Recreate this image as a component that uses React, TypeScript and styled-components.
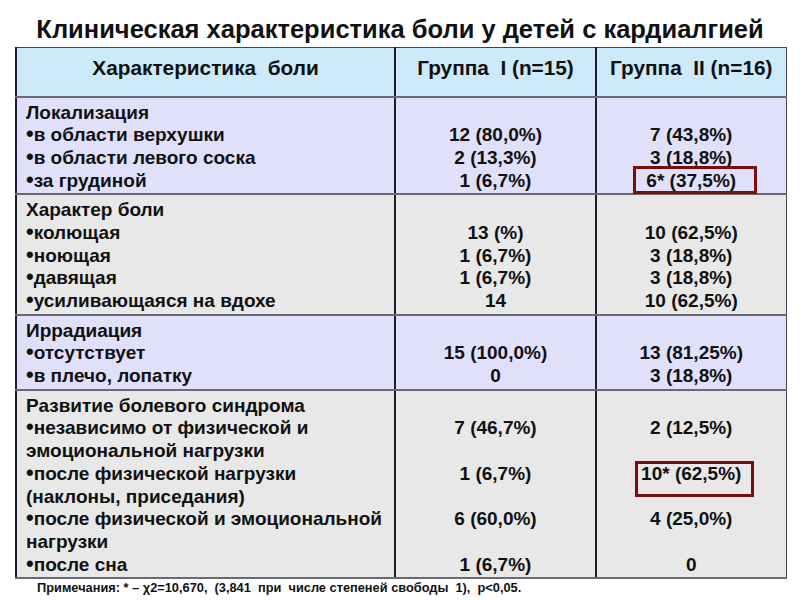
import React from "react";
import styled, { createGlobalStyle } from "styled-components";

const GlobalStyle = createGlobalStyle`
  html, body {
    margin: 0;
    padding: 0;
    background: #ffffff;
  }
  body {
    font-family: "Liberation Sans", Arial, sans-serif;
    color: #111111;
  }
`;

const Page = styled.div`
  width: 800px;
  height: 600px;
  display: flex;
  flex-direction: column;
  overflow: hidden;
`;

const Title = styled.h1`
  margin: 0;
  padding-top: 15px;
  height: 32px;
  text-align: center;
  font-size: 25.5px;
  line-height: 28px;
  font-weight: bold;
  color: #111111;
`;

const Table = styled.table`
  margin-left: 15px;
  width: 770px;
  border-collapse: collapse;
  table-layout: fixed;
  border: 1px solid #444450;
`;

const HeadRow = styled.tr`
  background: #cdeafb;
  height: 49px;
`;

const HeadCell = styled.th`
  padding: 0 0 8px 0;
  font-size: 20.8px;
  line-height: 24px;
  font-weight: bold;
  text-align: center;
  vertical-align: middle;
  border-left: 2px solid #1c1c2c;
  border-bottom: 2px solid #6a6a74;
  white-space: pre;
`;

const Row = styled.tr<{ $tone: "violet" | "grey" }>`
  background: ${(p) => (p.$tone === "violet" ? "#e0e0fb" : "#e8e8e8")};
`;

const Cell = styled.td<{ $center?: boolean }>`
  padding: 4px 0 1px ${(p) => (p.$center ? "0" : "9px")};
  font-size: 19px;
  line-height: 22.7px;
  font-weight: bold;
  text-align: ${(p) => (p.$center ? "center" : "left")};
  vertical-align: top;
  border-left: 2px solid #1c1c2c;
  border-bottom: 2px solid #6a6a74;
  white-space: nowrap;
`;

const Line = styled.div`
  height: 22.7px;
`;

const Bullet = styled.span`
  font-size: 1.15em;
  line-height: 0;
`;

const Marked = styled.span<{ $l: number; $r: number; $t: number; $b: number }>`
  position: relative;
  &::after {
    content: "";
    position: absolute;
    left: ${(p) => -p.$l}px;
    right: ${(p) => -p.$r}px;
    top: ${(p) => -p.$t}px;
    bottom: ${(p) => -p.$b}px;
    border: 3px solid #7a0c0c;
  }
`;

const Note = styled.div`
  padding-left: 37px;
  margin-top: 1px;
  font-size: 12.8px;
  line-height: 15px;
  font-weight: bold;
  white-space: pre;
`;

type Mark = { text: string; l: number; r: number; t: number; b: number };
type Val = string | Mark | null;

type Section = {
  tone: "violet" | "grey";
  lines: string[];
  g1: Val[];
  g2: Val[];
};

const sections: Section[] = [
  {
    tone: "violet",
    lines: ["Локализация", "•в области верхушки", "•в области левого соска", "•за грудиной"],
    g1: [null, "12 (80,0%)", "2 (13,3%)", "1 (6,7%)"],
    g2: [null, "7 (43,8%)", "3 (18,8%)", { text: "6* (37,5%)", l: 13, r: 21, t: 4, b: 3 }],
  },
  {
    tone: "grey",
    lines: ["Характер боли", "•колющая", "•ноющая", "•давящая", "•усиливающаяся на вдохе"],
    g1: [null, "13 (%)", "1 (6,7%)", "1 (6,7%)", "14"],
    g2: [null, "10 (62,5%)", "3 (18,8%)", "3 (18,8%)", "10 (62,5%)"],
  },
  {
    tone: "violet",
    lines: ["Иррадиация", "•отсутствует", "•в плечо, лопатку"],
    g1: [null, "15 (100,0%)", "0"],
    g2: [null, "13 (81,25%)", "3 (18,8%)"],
  },
  {
    tone: "grey",
    lines: [
      "Развитие болевого синдрома",
      "•независимо от физической и",
      "эмоциональной нагрузки",
      "•после физической нагрузки",
      "(наклоны, приседания)",
      "•после физической и эмоциональной",
      "нагрузки",
      "•после сна",
    ],
    g1: [null, "7 (46,7%)", null, "1 (6,7%)", null, "6 (60,0%)", null, "1 (6,7%)"],
    g2: [
      null,
      "2 (12,5%)",
      null,
      { text: "10* (62,5%)", l: 6, r: 13, t: 2, b: 13 },
      null,
      "4 (25,0%)",
      null,
      "0",
    ],
  },
];

const renderText = (l: string) =>
  l.startsWith("•") ? (
    <>
      <Bullet>•</Bullet>
      {l.slice(1)}
    </>
  ) : (
    l
  );

const renderVal = (v: Val, i: number) => {
  if (v === null) return <Line key={i}>{"\u00a0"}</Line>;
  if (typeof v === "string") return <Line key={i}>{v}</Line>;
  return (
    <Line key={i}>
      <Marked $l={v.l} $r={v.r} $t={v.t} $b={v.b}>
        {v.text}
      </Marked>
    </Line>
  );
};

export default function App() {
  return (
    <Page>
      <GlobalStyle />
      <Title>Клиническая характеристика боли у детей с кардиалгией</Title>
      <Table>
        <colgroup>
          <col style={{ width: 379 }} />
          <col style={{ width: 201 }} />
          <col style={{ width: 190 }} />
        </colgroup>
        <thead>
          <HeadRow>
            <HeadCell>{"Характеристика  боли"}</HeadCell>
            <HeadCell>{"Группа  I (n=15)"}</HeadCell>
            <HeadCell>{"Группа  II (n=16)"}</HeadCell>
          </HeadRow>
        </thead>
        <tbody>
          {sections.map((s, si) => (
            <Row key={si} $tone={s.tone}>
              <Cell>
                {s.lines.map((l, i) => (
                  <Line key={i}>{renderText(l)}</Line>
                ))}
              </Cell>
              <Cell $center>{s.g1.map(renderVal)}</Cell>
              <Cell $center>{s.g2.map(renderVal)}</Cell>
            </Row>
          ))}
        </tbody>
      </Table>
      <Note>{"Примечания: * – χ2=10,670,  (3,841  при  числе степеней свободы  1),  p<0,05."}</Note>
    </Page>
  );
}
